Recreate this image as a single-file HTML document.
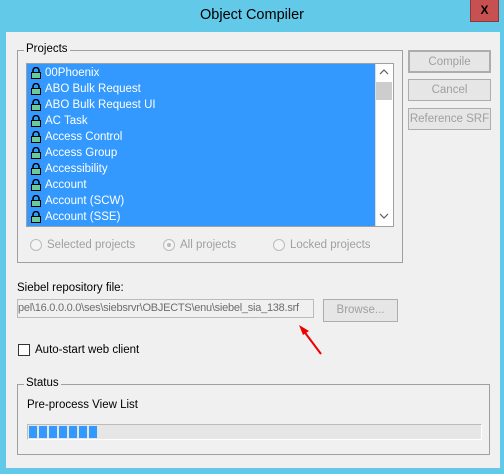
<!DOCTYPE html><html><head><style>
*{margin:0;padding:0;box-sizing:border-box}
body{width:504px;height:474px;background:#62c9e8;font-family:"Liberation Sans",sans-serif;font-size:11.5px;color:#000;position:relative;overflow:hidden}
.a{position:absolute}
.title{left:0;top:7px;width:504px;text-align:center;font-size:14.5px;color:#000}
.close{left:470px;top:0;width:29px;height:22px;background:#c75050;border:1px solid #8a3a3a;border-top:none;color:#000;font-weight:bold;font-size:12px;text-align:center;line-height:20px}
.client{left:6px;top:32px;width:494px;height:436px;background:#f0f0f0}
.grp{border:1px solid #a0a0a0}
.gl{background:#f0f0f0;padding:0 2px;font-size:11.5px}
.list{left:26px;top:63px;width:368px;height:164px;border:1px solid #a0a0a0;background:#3399ff;overflow:hidden}
.row{height:16px;line-height:17px;color:#fff;padding-left:18px;position:relative;font-size:11.5px}
.lk{position:absolute;left:4px;top:2px;width:10px;height:12px}
.sb{left:375px;top:64px;width:18px;height:162px;background:#fff;border-left:1px solid #ddd}
.btn{border:1px solid #adadad;background:#e6e6e6;color:#a0a0a0;text-align:center;font-size:11.5px}
.dis{color:#a0a0a0}
.radio{width:12px;height:12px;border:1px solid #bbb;border-radius:50%;background:#f4f4f4}
</style></head><body>
<div class="a title">Object Compiler</div>
<div class="a close">X</div>
<div class="a client"></div>
<div class="a grp" style="left:17px;top:50px;width:386px;height:213px"></div>
<div class="a gl" style="left:24px;top:43px">Projects</div>
<div class="a list">
<div style="height:1px"></div>
<div class="row"><svg class="lk" viewBox="0 0 10 12"><path d="M2 6V3.5a3 3 0 0 1 6 0V6" fill="none" stroke="#000" stroke-width="1.5"/><rect x="0.5" y="5.5" width="9" height="6" fill="#6c9" stroke="#000"/></svg>00Phoenix</div>
<div class="row"><svg class="lk" viewBox="0 0 10 12"><path d="M2 6V3.5a3 3 0 0 1 6 0V6" fill="none" stroke="#000" stroke-width="1.5"/><rect x="0.5" y="5.5" width="9" height="6" fill="#6c9" stroke="#000"/></svg>ABO Bulk Request</div>
<div class="row"><svg class="lk" viewBox="0 0 10 12"><path d="M2 6V3.5a3 3 0 0 1 6 0V6" fill="none" stroke="#000" stroke-width="1.5"/><rect x="0.5" y="5.5" width="9" height="6" fill="#6c9" stroke="#000"/></svg>ABO Bulk Request UI</div>
<div class="row"><svg class="lk" viewBox="0 0 10 12"><path d="M2 6V3.5a3 3 0 0 1 6 0V6" fill="none" stroke="#000" stroke-width="1.5"/><rect x="0.5" y="5.5" width="9" height="6" fill="#6c9" stroke="#000"/></svg>AC Task</div>
<div class="row"><svg class="lk" viewBox="0 0 10 12"><path d="M2 6V3.5a3 3 0 0 1 6 0V6" fill="none" stroke="#000" stroke-width="1.5"/><rect x="0.5" y="5.5" width="9" height="6" fill="#6c9" stroke="#000"/></svg>Access Control</div>
<div class="row"><svg class="lk" viewBox="0 0 10 12"><path d="M2 6V3.5a3 3 0 0 1 6 0V6" fill="none" stroke="#000" stroke-width="1.5"/><rect x="0.5" y="5.5" width="9" height="6" fill="#6c9" stroke="#000"/></svg>Access Group</div>
<div class="row"><svg class="lk" viewBox="0 0 10 12"><path d="M2 6V3.5a3 3 0 0 1 6 0V6" fill="none" stroke="#000" stroke-width="1.5"/><rect x="0.5" y="5.5" width="9" height="6" fill="#6c9" stroke="#000"/></svg>Accessibility</div>
<div class="row"><svg class="lk" viewBox="0 0 10 12"><path d="M2 6V3.5a3 3 0 0 1 6 0V6" fill="none" stroke="#000" stroke-width="1.5"/><rect x="0.5" y="5.5" width="9" height="6" fill="#6c9" stroke="#000"/></svg>Account</div>
<div class="row"><svg class="lk" viewBox="0 0 10 12"><path d="M2 6V3.5a3 3 0 0 1 6 0V6" fill="none" stroke="#000" stroke-width="1.5"/><rect x="0.5" y="5.5" width="9" height="6" fill="#6c9" stroke="#000"/></svg>Account (SCW)</div>
<div class="row"><svg class="lk" viewBox="0 0 10 12"><path d="M2 6V3.5a3 3 0 0 1 6 0V6" fill="none" stroke="#000" stroke-width="1.5"/><rect x="0.5" y="5.5" width="9" height="6" fill="#6c9" stroke="#000"/></svg>Account (SSE)</div>
</div>
<div class="a sb"></div>
<div class="a" style="left:376px;top:82px;width:16px;height:18px;background:#cdcdcd"></div>
<svg class="a" style="left:379px;top:68px" width="10" height="8"><path d="M1 6L5 2L9 6" fill="none" stroke="#606060" stroke-width="1.2"/></svg>
<svg class="a" style="left:379px;top:212px" width="10" height="8"><path d="M1 2L5 6L9 2" fill="none" stroke="#606060" stroke-width="1.2"/></svg>
<div class="a radio" style="left:30px;top:239px"></div><div class="a dis" style="left:47px;top:239px">Selected projects</div>
<div class="a radio" style="left:163px;top:239px"></div><div class="a" style="left:167px;top:243px;width:4px;height:4px;border-radius:50%;background:#bbb"></div><div class="a dis" style="left:180px;top:239px">All projects</div>
<div class="a radio" style="left:273px;top:239px"></div><div class="a dis" style="left:290px;top:239px">Locked projects</div>
<div class="a btn" style="left:408px;top:50px;width:83px;height:23px;line-height:21px;border:2px solid #adadad">Compile</div>
<div class="a btn" style="left:408px;top:79px;width:83px;height:22px;line-height:20px">Cancel</div>
<div class="a btn" style="left:408px;top:108px;width:83px;height:22px;line-height:20px">Reference SRF</div>
<div class="a" style="left:17px;top:282px">Siebel repository file:</div>
<div class="a" style="left:17px;top:299px;width:297px;height:19px;border:1px solid #bbb;background:#f0f0f0;color:#6d6d6d;line-height:17px;overflow:hidden;white-space:nowrap;font-size:11px;letter-spacing:-0.25px">pel\16.0.0.0.0\ses\siebsrvr\OBJECTS\enu\siebel_sia_138.srf</div>
<div class="a btn" style="left:323px;top:299px;width:75px;height:23px;line-height:21px">Browse...</div>
<svg class="a" style="left:295px;top:320px" width="30" height="36"><path d="M26 34L8 10" stroke="#e00" stroke-width="2"/><path d="M4 5L14 11L8 15Z" fill="#e00"/></svg>
<div class="a" style="left:18px;top:344px;width:12px;height:12px;border:1px solid #333;background:#fff"></div>
<div class="a" style="left:35px;top:344px">Auto-start web client</div>
<div class="a grp" style="left:17px;top:384px;width:473px;height:71px"></div>
<div class="a gl" style="left:24px;top:377px">Status</div>
<div class="a" style="left:27px;top:399px">Pre-process View List</div>
<div class="a" style="left:27px;top:424px;width:455px;height:16px;border:1px solid #bcbcbc;background:#e6e6e6;border-right-color:#fff;border-bottom-color:#fff"></div>
<div class="a" style="left:29px;top:426px;width:68px;height:12px;background:repeating-linear-gradient(90deg,#3399ff 0 8px,#e6e6e6 8px 10px)"></div>
</body></html>
